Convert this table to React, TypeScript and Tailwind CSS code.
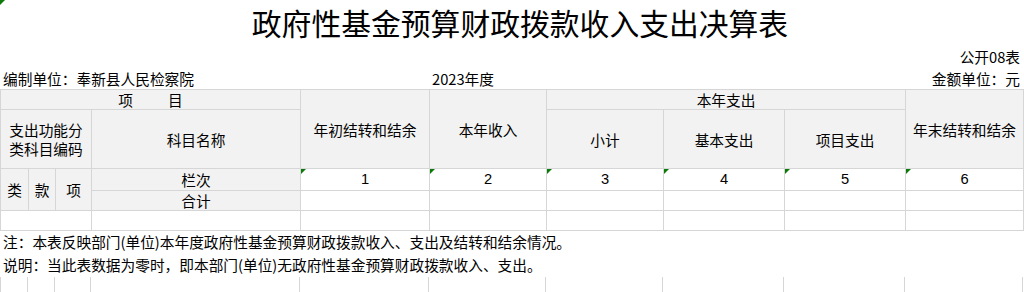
import React from "react";

const FONT = "font-['Noto_Sans_CJK_SC',sans-serif]";

// column widths of the sheet grid, left to right
const COLS = [28, 27, 36, 209, 129, 117, 117, 121, 121, 118];

const cell = "border border-[#d6d6d6] p-0 text-center align-middle";
const head = `${cell} bg-[#f2f2f2]`;

function Flag() {
    return (
        <span className="absolute left-0 top-0 h-0 w-0 border-t-[5px] border-r-[5px] border-t-[#0b7a0b] border-r-transparent" />
    );
}

export default function App() {
    return (
        <div className={`relative w-[1024px] h-[292px] overflow-hidden bg-white text-black ${FONT}`}>
            <span className="absolute left-0 top-0 h-0 w-0 border-t-[5px] border-r-[5px] border-t-[#0b7a0b] border-r-transparent" />

            {/* title */}
            <div className="h-[46px] flex items-center justify-center pl-[16px] text-[29.8px] leading-none">
                政府性基金预算财政拨款收入支出决算表
            </div>

            <div className="h-[23px] flex items-center justify-end pr-[4px] text-[14.7px] leading-none">
                公开08表
            </div>

            <div className="h-[20px] flex items-center text-[14.7px] leading-none">
                <div className="w-[432px] pl-[3px]">编制单位：奉新县人民检察院</div>
                <div>2023年度</div>
                <div className="ml-auto pr-[4px]">金额单位：元</div>
            </div>

            {/* main table */}
            <table className="border-collapse table-fixed w-[1023px] text-[14.7px] leading-[19px]">
                <colgroup>
                    {COLS.map((w, i) => (
                        <col key={i} style={{ width: w }} />
                    ))}
                </colgroup>
                <tbody>
                    <tr className="h-[17px]">
                        <td colSpan={4} className={head}>
                            <span>项</span>
                            <span className="ml-[35px]">目</span>
                        </td>
                        <td rowSpan={2} className={head}>年初结转和结余</td>
                        <td rowSpan={2} className={head}>本年收入</td>
                        <td colSpan={3} className={head}>本年支出</td>
                        <td rowSpan={2} className={head}>年末结转和结余</td>
                    </tr>
                    <tr className="h-[59px]">
                        <td colSpan={3} className={head}>
                            支出功能分
                            <br />
                            类科目编码
                        </td>
                        <td className={head}>科目名称</td>
                        <td className={head}>小计</td>
                        <td className={head}>基本支出</td>
                        <td className={head}>项目支出</td>
                    </tr>
                    <tr className="h-[22px]">
                        <td rowSpan={2} className={head}>类</td>
                        <td rowSpan={2} className={head}>款</td>
                        <td rowSpan={2} className={head}>项</td>
                        <td className={head}>栏次</td>
                        {[1, 2, 3, 4, 5, 6].map((n) => (
                            <td key={n} className={`${cell} relative font-['Liberation_Sans',sans-serif]`}>
                                <Flag />
                                {n}
                            </td>
                        ))}
                    </tr>
                    <tr className="h-[20px]">
                        <td className={head}>合计</td>
                        {[1, 2, 3, 4, 5, 6].map((n) => (
                            <td key={n} className={cell} />
                        ))}
                    </tr>
                    <tr className="h-[20px]">
                        <td colSpan={3} className={cell} />
                        <td className={cell} />
                        {[1, 2, 3, 4, 5, 6].map((n) => (
                            <td key={n} className={cell} />
                        ))}
                    </tr>
                </tbody>
            </table>

            {/* notes */}
            <div className="h-[23px] flex items-center pl-[3px] text-[14.7px] leading-none">
                注：本表反映部门(单位)本年度政府性基金预算财政拨款收入、支出及结转和结余情况。
            </div>
            <div className="h-[23px] flex items-center pl-[3px] text-[14.7px] leading-none">
                说明：当此表数据为零时，即本部门(单位)无政府性基金预算财政拨款收入、支出。
            </div>

            {/* next sheet row, grid only */}
            <div className="flex h-[16px] w-[1023px] border-b border-[#d6d6d6]">
                {COLS.map((w, i) => (
                    <div
                        key={i}
                        className="border-r border-[#d6d6d6] first:border-l"
                        style={{ width: w }}
                    />
                ))}
            </div>
        </div>
    );
}
